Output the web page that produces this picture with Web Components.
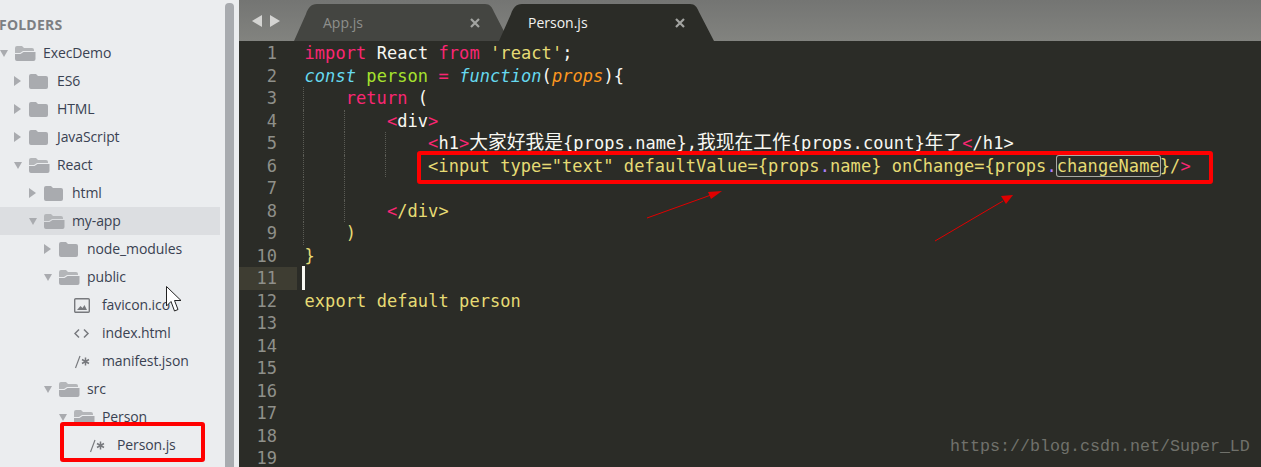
<!DOCTYPE html>
<html>
<head>
<meta charset="utf-8">
<title>Person.js</title>
<style>
  html, body { margin: 0; background: #2b2c27; }
  body { width: 1261px; height: 467px; overflow: hidden; }
</style>
</head>
<body>
<app-window>
  <side-bar slot="side">
    <tree-row depth="0" kind="open">ExecDemo</tree-row>
    <tree-row depth="1" kind="closed">ES6</tree-row>
    <tree-row depth="1" kind="closed">HTML</tree-row>
    <tree-row depth="1" kind="closed">JavaScript</tree-row>
    <tree-row depth="1" kind="open">React</tree-row>
    <tree-row depth="2" kind="closed">html</tree-row>
    <tree-row depth="2" kind="open" selected>my-app</tree-row>
    <tree-row depth="3" kind="closed">node_modules</tree-row>
    <tree-row depth="3" kind="open">public</tree-row>
    <tree-row depth="4" kind="image">favicon.ico</tree-row>
    <tree-row depth="4" kind="markup">index.html</tree-row>
    <tree-row depth="4" kind="comment">manifest.json</tree-row>
    <tree-row depth="3" kind="open">src</tree-row>
    <tree-row depth="4" kind="open">Person</tree-row>
    <tree-row depth="5" kind="comment">Person.js</tree-row>
    <tree-row depth="4" kind="comment"></tree-row>
  </side-bar>
  <editor-pane slot="main">
    <code-line n="1"><b class="k">import</b> <b class="w">React</b> <b class="k">from</b> <b class="s">'react'</b><b class="w">;</b></code-line>
    <code-line n="2"><b class="c">const</b> <b class="g">person</b> <b class="k">=</b> <b class="c">function</b><b class="w">(</b><b class="p">props</b><b class="w">){</b></code-line>
    <code-line n="3" indent="1"><b class="k">return</b> <b class="w">(</b></code-line>
    <code-line n="4" indent="2"><b class="k">&lt;</b><b class="w">div</b><b class="k">&gt;</b></code-line>
    <code-line n="5" indent="3"><b class="k">&lt;</b><b class="w">h1</b><b class="k">&gt;</b><b class="z">大家好我是</b><b class="w">{props.name},</b><b class="z">我现在工作</b><b class="w">{props.count}</b><b class="z">年了</b><b class="k">&lt;</b><b class="w">/h1&gt;</b></code-line>
    <code-line n="6" indent="3">&lt;input type="text" defaultValue={props<b class="v">.</b>name} onChange={props<b class="v">.</b><b class="sel">changeName</b>}/<b class="k">&gt;</b></code-line>
    <code-line n="7" indent="2"></code-line>
    <code-line n="8" indent="2"><b class="k">&lt;</b>/div&gt;</code-line>
    <code-line n="9" indent="1">)</code-line>
    <code-line n="10">}</code-line>
    <code-line n="11" active></code-line>
    <code-line n="12">export default person</code-line>
    <code-line n="13"></code-line>
    <code-line n="14"></code-line>
    <code-line n="15"></code-line>
    <code-line n="16"></code-line>
    <code-line n="17"></code-line>
    <code-line n="18"></code-line>
    <code-line n="19"></code-line>
  </editor-pane>
</app-window>

<script>
// outer frame: sidebar + editor, plus the things drawn on top of the screenshot
class AppWindow extends HTMLElement {
  constructor() {
    super();
    const shadow = this.attachShadow({ mode: 'open' });
    shadow.innerHTML = `
      <style>
        :host { display: flex; width: 1261px; height: 467px; position: relative; overflow: hidden; }
        .box { position: absolute; border: 4px solid #f00; border-radius: 3px; box-sizing: border-box; }
        .box.file { left: 60px; top: 422px; width: 145px; height: 40px; }
        .box.code { left: 417px; top: 151px; width: 796px; height: 33px; }
        svg { position: absolute; left: 0; top: 0; pointer-events: none; }
        .mark {
          position: absolute; left: 950px; top: 437px;
          font: 16.67px/20px "Liberation Mono", monospace; color: #70716b;
        }
      </style>
      <slot name="side"></slot>
      <slot name="main"></slot>
      <div class="box file"></div>
      <div class="box code"></div>
      <svg width="1261" height="467">
        <path d="M647 218 L711 195" stroke="#e00000" stroke-width="1" fill="none"/>
        <path d="M722 191 L708 192 L711 199 Z" fill="#e00000"/>
        <path d="M935 241 L1003 201" stroke="#e00000" stroke-width="1" fill="none"/>
        <path d="M1013 195 L1001 196 L1006 204 Z" fill="#e00000"/>
        <path d="M166.500 286.500 V306 L171 301.500 L174.500 311 L178 309.500 L174.500 300.500 L181 300.500 Z" fill="#fff" stroke="#222" stroke-width="1" stroke-linejoin="round"/>
      </svg>
      <div class="mark">https://blog.csdn.net/Super_LD</div>
    `;
  }
}

class SideBar extends HTMLElement {
  constructor() {
    super();
    const shadow = this.attachShadow({ mode: 'open' });
    shadow.innerHTML = `
      <style>
        :host {
          display: flex; flex: none; width: 239px; height: 467px; overflow: hidden;
          background: #ebedef; color: #3a4252;
          font: 14px "Open Sans", sans-serif; letter-spacing: -.1px;
        }
        .tree { width: 220px; flex: none; }
        h2 {
          margin: 0 0 0 -1px; height: 39px; padding-top: 16px; box-sizing: border-box;
          font: 700 14px/18px "Open Sans", sans-serif; color: #7d7f83; letter-spacing: .2px;
        }
        .thumb { width: 9px; margin: 3px 0 0 5px; background: #a8abaf; border-radius: 4px 4px 0 0; }
      </style>
      <div class="tree"><h2>FOLDERS</h2><slot></slot></div>
      <div class="thumb"></div>
    `;
  }
}

// one row of the folder tree
const TREE_ICONS = {
  closed: `<path d="M0 2a2 2 0 0 1 2-2h5l2 2h8a2 2 0 0 1 2 2v9a2 2 0 0 1-2 2H2a2 2 0 0 1-2-2Z" fill="#a9abaf"/>`,
  open: `<path d="M0 2a2 2 0 0 1 2-2h5l2 2h8a2 2 0 0 1 2 2v1H8L5 7H0Z" fill="#b4b6b9"/>
         <path d="M0 13V8h5.500l3-2H20.500V13a2 2 0 0 1-2 2H2a2 2 0 0 1-2-2Z" fill="#a9abaf"/>`,
  image: `<rect x=".7" y=".7" width="14.600" height="13.600" rx="1" fill="none" stroke="#77797d" stroke-width="1.400"/>
          <path d="M3 12 L6.500 8 L8.500 10 L10.500 7 L13 12 Z" fill="#77797d"/>`,
  markup: `<path d="M5 3.500 L1 7.500 L5 11.500 M10 3.500 L14 7.500 L10 11.500" fill="none" stroke="#77797d" stroke-width="1.500"/>`,
  comment: `<path d="M1.500 14 L6 2" fill="none" stroke="#77797d" stroke-width="1.200"/>
            <path d="M11.500 3.500 V11.500 M8 5.500 L15 9.500 M15 5.500 L8 9.500" fill="none" stroke="#77797d" stroke-width="1.500"/>`
};

class TreeRow extends HTMLElement {
  constructor() {
    super();
    this.attachShadow({ mode: 'open' });
  }

  connectedCallback() {
    const depth = Number(this.getAttribute('depth') || 0);
    const kind = this.getAttribute('kind');
    const isFolder = kind === 'open' || kind === 'closed';
    let arrow = '';
    if (isFolder) {
      arrow = kind === 'open'
        ? '<svg width="8" height="7" viewBox="0 0 8 7"><path d="M0 0H8L4 7Z" fill="#a9abaf"/></svg>'
        : '<svg width="7" height="10" viewBox="0 0 7 10"><path d="M0 0L7 5L0 10Z" fill="#a9abaf"/></svg>';
    }
    this.shadowRoot.innerHTML = `
      <style>
        :host {
          display: flex; align-items: center; height: 28px;
          padding-left: ${depth * 15 - 1}px; white-space: nowrap;
        }
        :host([selected]) { background: #dcdee1; }
        .arrow { width: 15px; flex: none; display: flex; align-items: center; }
        .icon { width: 28px; flex: none; display: flex; align-items: center; }
        .label { margin-top: -2px; }
      </style>
      <span class="arrow">${arrow}</span>
      <span class="icon"><svg width="21" height="15" viewBox="0 0 21 15">${TREE_ICONS[kind]}</svg></span>
      <span class="label"><slot></slot></span>
    `;
  }
}

class EditorPane extends HTMLElement {
  constructor() {
    super();
    const shadow = this.attachShadow({ mode: 'open' });
    shadow.innerHTML = `
      <style>
        :host { display: block; flex: 1; min-width: 0; height: 467px; background: #2b2c27; overflow: hidden; }
        .bar {
          display: flex; align-items: flex-end; height: 41px; box-sizing: border-box;
          background: linear-gradient(#747573, #82837f);
          font: 14px "Open Sans", sans-serif;
        }
        .nav { flex: none; display: flex; gap: 8px; align-items: center; width: 55px; height: 41px; padding-left: 13px; box-sizing: border-box; }
        .body { padding-top: 1px; }
      </style>
      <div class="bar">
        <div class="nav">
          <svg width="10" height="12" viewBox="0 0 10 12"><path d="M10 0V12L0 6Z" fill="#d4d4d2"/></svg>
          <svg width="10" height="12" viewBox="0 0 10 12"><path d="M0 0V12L10 6Z" fill="#d4d4d2"/></svg>
        </div>
        <editor-tab>App.js</editor-tab>
        <editor-tab active>Person.js</editor-tab>
      </div>
      <div class="body"><slot></slot></div>
    `;
  }
}

class EditorTab extends HTMLElement {
  constructor() {
    super();
    const shadow = this.attachShadow({ mode: 'open' });
    shadow.innerHTML = `
      <style>
        :host {
          display: flex; align-items: center; justify-content: space-between; flex: none;
          width: 215px; height: 37px; box-sizing: border-box; padding: 0 30px 0 28px; margin-right: -10px;
          background: #444541; color: #8e8f8c; position: relative;
          clip-path: path("M0 37 L12 10 C14 4 17 0 23 0 H191 C196 0 198 3 200 8 L215 37 Z");
        }
        :host([active]) { background: #2b2c27; color: #f2f2f0; z-index: 1; }
        span { margin-left: 1px; }
        svg { flex: none; margin-right: -1px; }
      </style>
      <span><slot></slot></span>
      <svg width="10" height="10" viewBox="0 0 10 10"><path d="M1 1L9 9M9 1L1 9" stroke="#a3a4a1" stroke-width="2.200"/></svg>
    `;
  }
}

// gutter number + code; tokens are passed in as <b class="..."> children
class CodeLine extends HTMLElement {
  constructor() {
    super();
    this.attachShadow({ mode: 'open' });
  }

  connectedCallback() {
    const indent = Number(this.getAttribute('indent') || 0);
    const guides = '<i></i>'.repeat(indent);
    this.shadowRoot.innerHTML = `
      <style>
        :host {
          display: flex; height: 22.5px;
          font: 17px/22.5px "DejaVu Sans Mono", monospace; letter-spacing: .07px;
          color: #e6db74; white-space: pre;
        }
        .num { flex: none; width: 58px; box-sizing: border-box; padding-right: 20px; text-align: right; color: #8f908a; font-size: 17px; }
        :host([active]) .num { background: #3e3d32; }
        .text { flex: 1; padding-left: 6px; display: flex; position: relative; }
        .code { margin-left: 1.5px; }
        i { flex: none; width: 41.2px; box-sizing: border-box; border-left: 1px dotted #5b5c55; }
        :host([active]) .text::before {
          content: ""; position: absolute; left: 5px; top: -1px; width: 2.5px; height: 24px; background: #f8f8f2;
        }
        ::slotted(b) { font-weight: 400; }
        ::slotted(.k) { color: #f92672; }
        ::slotted(.w) { color: #f8f8f2; }
        ::slotted(.s) { color: #e6db74; }
        ::slotted(.c) { color: #66d9ef; font-style: italic; }
        ::slotted(.g) { color: #a6e22e; }
        ::slotted(.p) { color: #fd971f; font-style: italic; }
        ::slotted(.v) { color: #ae81ff; }
        ::slotted(.z) { color: #f8f8f2; font: 18.75px/0 "Noto Sans CJK SC", sans-serif; letter-spacing: 0; }
        ::slotted(.sel) { box-shadow: 0 0 0 1px #a9aaa5; border-radius: 2px; }
      </style>
      <div class="num">${this.getAttribute('n')}</div>
      <div class="text">${guides}<span class="code"><slot></slot></span></div>
    `;
  }
}

customElements.define('app-window', AppWindow);
customElements.define('side-bar', SideBar);
customElements.define('tree-row', TreeRow);
customElements.define('editor-pane', EditorPane);
customElements.define('editor-tab', EditorTab);
customElements.define('code-line', CodeLine);
</script>
</body>
</html>
